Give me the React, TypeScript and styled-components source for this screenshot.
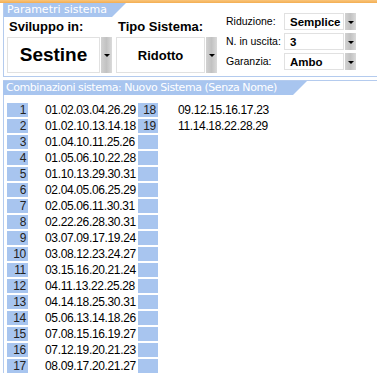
import React from "react"
import styled, { createGlobalStyle } from "styled-components"

const GlobalStyle = createGlobalStyle`
  body {
    margin: 0;
    background: #fff;
    font-family: "Liberation Sans", Arial, sans-serif;
    color: #000;
    overflow: hidden;
  }
`

const LINE = "#b4cbee"
const BLUE = "#a8c5ef"

const combos = [
  "01.02.03.04.26.29", "01.02.10.13.14.18", "01.04.10.11.25.26", "01.05.06.10.22.28",
  "01.10.13.29.30.31", "02.04.05.06.25.29", "02.05.06.11.30.31", "02.22.26.28.30.31",
  "03.07.09.17.19.24", "03.08.12.23.24.27", "03.15.16.20.21.24", "04.11.13.22.25.28",
  "04.14.18.25.30.31", "05.06.13.14.18.26", "07.08.15.16.19.27", "07.12.19.20.21.23",
  "08.09.17.20.21.27", "09.12.15.16.17.23", "11.14.18.22.28.29",
]

const ROWS = 17

const Page = styled.div`
  width: 377px;
  height: 373px;
  overflow: hidden;
`

const TopStripe = styled.div`
  height: 3px;
  background: linear-gradient(#f9c47a, #f3ae52);
`

const Section = styled.section<{ $gap?: number }>`
  margin-top: ${p => p.$gap ?? 0}px;
  padding-left: 3px;
`

const Panel = styled.div<{ $bottom?: boolean }>`
  border-left: 1px solid ${LINE};
  border-bottom: ${p => (p.$bottom ? `1px solid ${LINE}` : "none")};
`

const TopPanel = styled(Panel)`
  display: flex;
  height: 73px;
`

const Tab = styled.div<{ $width: number; $spacing?: number }>`
  width: ${p => p.$width}px;
  height: 14px;
  background: ${BLUE};
  color: #fff;
  font-family: "DejaVu Sans", Verdana, sans-serif;
  font-size: 11px;
  letter-spacing: ${p => p.$spacing ?? 0}px;
  line-height: 14px;
  padding-left: 3px;
  box-sizing: border-box;
  white-space: nowrap;
  overflow: hidden;
  clip-path: polygon(0 0, 100% 0, calc(100% - 14px) 100%, 0 100%);
`

const SectionLine = styled.div`
  border-top: 1px solid ${LINE};
`

const LeftCol = styled.div`
  display: flex;
  flex-direction: column;
`

const Groups = styled.div`
  display: flex;
  gap: 4px;
  padding-left: 3px;
`

const Group = styled.div<{ $width: number }>`
  width: ${p => p.$width}px;
  display: flex;
  flex-direction: column;
`

const GroupLabel = styled.div`
  height: 20px;
  font-size: 13px;
  font-weight: bold;
  line-height: 20px;
  padding-left: 2px;
  white-space: nowrap;
`

const SelectBox = styled.div<{ $height: number }>`
  display: flex;
  height: ${p => p.$height}px;
`

const SelectValue = styled.div<{ $size: number; $center?: boolean }>`
  flex: 1;
  min-width: 0;
  border: 1px solid #e1e1e1;
  background: #fff;
  display: flex;
  align-items: center;
  justify-content: ${p => (p.$center ? "center" : "flex-start")};
  padding-left: ${p => (p.$center ? 0 : 5)}px;
  font-size: ${p => p.$size}px;
  font-weight: bold;
  white-space: nowrap;
  overflow: hidden;
`

const SelectArrow = styled.div`
  width: 11px;
  flex: none;
  margin-left: 1px;
  background: linear-gradient(90deg, #d2d2d2, #c2c2c2 50%, #dadada);
  display: flex;
  align-items: center;
  justify-content: center;

  &::after {
    content: "";
    border-left: 3px solid transparent;
    border-right: 3px solid transparent;
    border-top: 3px solid #000;
    margin-top: 1px;
  }
`

const Options = styled.div`
  margin-left: 9px;
  margin-top: 10px;
  display: grid;
  grid-template-columns: 58px 72px;
  grid-auto-rows: 17px;
  row-gap: 3px;
`

const OptionLabel = styled.div`
  font-size: 10.5px;
  line-height: 17px;
  white-space: nowrap;
`

const GridPanel = styled(Panel)`
  height: 300px;
  padding: 8px 0 0 3px;
`

const ComboGrid = styled.div`
  display: grid;
  grid-template-columns: 21px 110px 20px 1fr;
  grid-auto-rows: 14px;
  row-gap: 2px;
`

const NumCell = styled.div`
  background: ${BLUE};
  text-align: right;
  padding-right: 2px;
  font-size: 12px;
  letter-spacing: -0.3px;
  line-height: 14px;
  color: #222;
`

const ComboCell = styled.div<{ $indent: number }>`
  padding-left: ${p => p.$indent}px;
  font-size: 12px;
  letter-spacing: -0.35px;
  line-height: 14px;
  white-space: nowrap;
`

const Select = ({ value, height, size, center }: { value: string; height: number; size: number; center?: boolean }) => (
  <SelectBox $height={height}>
    <SelectValue $size={size} $center={center}>{value}</SelectValue>
    <SelectArrow />
  </SelectBox>
)

export default function App() {
  const rows = Array.from({ length: ROWS }, (_, i) => i)

  return (
    <Page>
      <GlobalStyle />
      <TopStripe />

      <Section>
        <TopPanel $bottom>
          <LeftCol>
            <Tab $width={122}>Parametri sistema</Tab>
            <Groups>
              <Group $width={105}>
                <GroupLabel>Sviluppo in:</GroupLabel>
                <Select value="Sestine" height={36} size={19} center />
              </Group>
              <Group $width={101}>
                <GroupLabel>Tipo Sistema:</GroupLabel>
                <Select value="Ridotto" height={36} size={13} center />
              </Group>
            </Groups>
          </LeftCol>
          <Options>
            <OptionLabel>Riduzione:</OptionLabel>
            <Select value="Semplice" height={17} size={11.5} />
            <OptionLabel>N. in uscita:</OptionLabel>
            <Select value="3" height={17} size={11.5} />
            <OptionLabel>Garanzia:</OptionLabel>
            <Select value="Ambo" height={17} size={11.5} />
          </Options>
        </TopPanel>
      </Section>

      <Section $gap={3}>
        <SectionLine />
        <Tab $width={304} $spacing={-0.45}>Combinazioni sistema: Nuovo Sistema (Senza Nome)</Tab>
        <GridPanel>
          <ComboGrid>
            {rows.map(i => (
              <React.Fragment key={i}>
                <NumCell>{i + 1}</NumCell>
                <ComboCell $indent={17}>{combos[i]}</ComboCell>
                <NumCell>{combos[i + ROWS] ? i + ROWS + 1 : ""}</NumCell>
                <ComboCell $indent={20}>{combos[i + ROWS] ?? ""}</ComboCell>
              </React.Fragment>
            ))}
          </ComboGrid>
        </GridPanel>
      </Section>
    </Page>
  )
}
